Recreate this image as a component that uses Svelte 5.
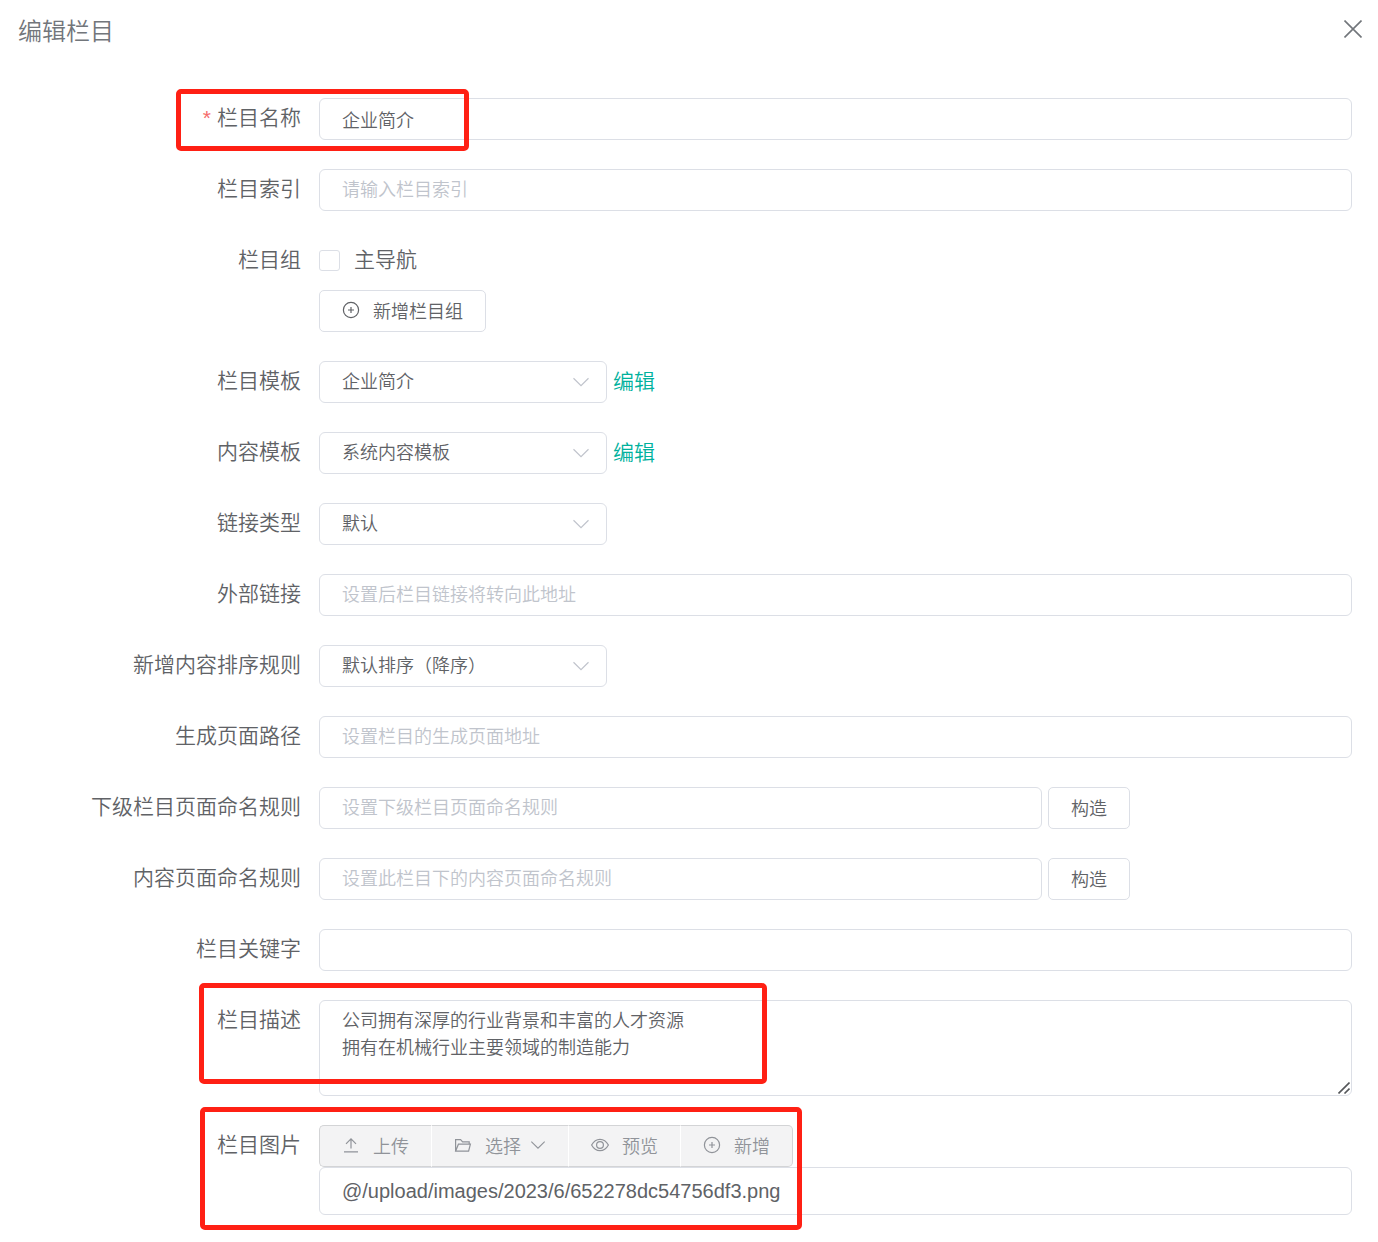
<script>
  let form = {
    name: '企业简介',
    index: '',
    mainNav: false,
    channelTemplate: '企业简介',
    contentTemplate: '系统内容模板',
    linkType: '默认',
    linkUrl: '',
    taxis: '默认排序（降序）',
    filePath: '',
    channelRule: '',
    contentRule: '',
    keywords: '',
    description: '公司拥有深厚的行业背景和丰富的人才资源\n拥有在机械行业主要领域的制造能力',
    image: '@/upload/images/2023/6/652278dc54756df3.png'
  };
</script>

{#snippet plusIcon()}
  <svg class="icon" viewBox="0 0 18 18" aria-hidden="true">
    <circle cx="9" cy="9" r="7.6" />
    <path d="M9 6v6M6 9h6" />
  </svg>
{/snippet}

{#snippet arrowIcon()}
  <svg class="icon arrow" viewBox="0 0 18 18" aria-hidden="true">
    <path d="M1.5 5.2 9 12.6l7.5-7.4" />
  </svg>
{/snippet}

<div class="dialog">
  <header>
    <h1>编辑栏目</h1>
    <button class="close" type="button" aria-label="关闭">
      <svg viewBox="0 0 18 18" aria-hidden="true"><path d="M.5.5l17 17M17.5.5l-17 17" /></svg>
    </button>
  </header>

  <form on:submit|preventDefault>
    <div class="row">
      <label class="label required" for="name">栏目名称</label>
      <input id="name" class="input" type="text" bind:value={form.name} />
      <div class="mark mark-name"></div>
    </div>

    <div class="row">
      <label class="label" for="index">栏目索引</label>
      <input id="index" class="input" type="text" placeholder="请输入栏目索引" bind:value={form.index} />
    </div>

    <div class="row">
      <span class="label">栏目组</span>
      <div class="groups">
        <label class="check">
          <input type="checkbox" bind:checked={form.mainNav} />
          主导航
        </label>
        <button class="button" type="button">{@render plusIcon()}新增栏目组</button>
      </div>
    </div>

    <div class="row">
      <label class="label" for="channelTemplate">栏目模板</label>
      <div class="line">
        <div class="select">
          <select id="channelTemplate" bind:value={form.channelTemplate}>
            <option>企业简介</option>
          </select>
          {@render arrowIcon()}
        </div>
        <a href="#channelTemplate">编辑</a>
      </div>
    </div>

    <div class="row">
      <label class="label" for="contentTemplate">内容模板</label>
      <div class="line">
        <div class="select">
          <select id="contentTemplate" bind:value={form.contentTemplate}>
            <option>系统内容模板</option>
          </select>
          {@render arrowIcon()}
        </div>
        <a href="#contentTemplate">编辑</a>
      </div>
    </div>

    <div class="row">
      <label class="label" for="linkType">链接类型</label>
      <div class="select">
        <select id="linkType" bind:value={form.linkType}>
          <option>默认</option>
        </select>
        {@render arrowIcon()}
      </div>
    </div>

    <div class="row">
      <label class="label" for="linkUrl">外部链接</label>
      <input id="linkUrl" class="input" type="text" placeholder="设置后栏目链接将转向此地址" bind:value={form.linkUrl} />
    </div>

    <div class="row">
      <label class="label" for="taxis">新增内容排序规则</label>
      <div class="select">
        <select id="taxis" bind:value={form.taxis}>
          <option>默认排序（降序）</option>
        </select>
        {@render arrowIcon()}
      </div>
    </div>

    <div class="row">
      <label class="label" for="filePath">生成页面路径</label>
      <input id="filePath" class="input" type="text" placeholder="设置栏目的生成页面地址" bind:value={form.filePath} />
    </div>

    <div class="row">
      <label class="label" for="channelRule">下级栏目页面命名规则</label>
      <div class="line">
        <input id="channelRule" class="input short" type="text" placeholder="设置下级栏目页面命名规则" bind:value={form.channelRule} />
        <button class="button" type="button">构造</button>
      </div>
    </div>

    <div class="row">
      <label class="label" for="contentRule">内容页面命名规则</label>
      <div class="line">
        <input id="contentRule" class="input short" type="text" placeholder="设置此栏目下的内容页面命名规则" bind:value={form.contentRule} />
        <button class="button" type="button">构造</button>
      </div>
    </div>

    <div class="row">
      <label class="label" for="keywords">栏目关键字</label>
      <input id="keywords" class="input" type="text" bind:value={form.keywords} />
    </div>

    <div class="row">
      <label class="label" for="description">栏目描述</label>
      <div class="area">
        <textarea id="description" class="input" bind:value={form.description}></textarea>
        <svg class="grip" viewBox="0 0 12 12" aria-hidden="true"><path d="M.5 11.5l11-11M6.5 11.5l5-5" /></svg>
      </div>
      <div class="mark mark-description"></div>
    </div>

    <div class="row">
      <label class="label" for="image">栏目图片</label>
      <div>
        <div class="button-group">
          <button class="button" type="button" disabled>
            <svg class="icon" viewBox="0 0 18 18" aria-hidden="true">
              <path d="M2 15.8h14M9 12.5V3M4 7.8l5-5 5 5" />
            </svg>
            上传
          </button>
          <button class="button" type="button" disabled>
            <svg class="icon" viewBox="0 0 18 18" aria-hidden="true">
              <path d="M1.6 15.2V3.6h5l2 2.2h6.6v2.4M1.6 15.2l2.8-7h12l-1.8 7z" />
            </svg>
            选择
            {@render arrowIcon()}
          </button>
          <button class="button" type="button" disabled>
            <svg class="icon" viewBox="0 0 18 18" aria-hidden="true">
              <path d="M.6 9C4.8 1.4 13.2 1.4 17.4 9 13.2 16.6 4.8 16.6.6 9z" />
              <circle cx="9" cy="9" r="3.4" />
            </svg>
            预览
          </button>
          <button class="button" type="button" disabled>{@render plusIcon()}新增</button>
        </div>
        <input id="image" class="input large" type="text" bind:value={form.image} />
      </div>
      <div class="mark mark-image"></div>
    </div>
  </form>
</div>

<style>
  :global(body) {
    background: #fff;
  }

  .dialog {
    padding: 18px 26px 26px 0;
    color: #606266;
    font-family: "Liberation Sans", "Noto Sans CJK SC", sans-serif;
    font-size: 21px;
    font-weight: 350;
  }

  header {
    display: flex;
    justify-content: space-between;
    height: 24px;
    margin: 0 -10px 56px 18px;
  }

  h1 {
    margin: 0;
    color: #72767b;
    font-size: 24px;
    font-weight: 350;
    line-height: 28px;
  }

  .close {
    width: 18px;
    height: 22px;
    padding: 0;
    border: 0;
    background: none;
    cursor: pointer;
  }

  .close svg {
    display: block;
    width: 18px;
    height: 18px;
    fill: none;
    stroke: #72767b;
    stroke-width: 1.6;
  }

  form {
    display: flex;
    flex-direction: column;
    gap: 29px;
  }

  .row {
    position: relative;
    display: grid;
    grid-template-columns: 301px minmax(0, 1fr);
    column-gap: 18px;
    align-items: start;
  }

  .label {
    text-align: right;
    line-height: 40px;
  }

  .required::before {
    content: '*';
    margin-right: 6px;
    color: #f56c6c;
  }

  .input,
  select {
    display: block;
    box-sizing: border-box;
    width: 100%;
    height: 42px;
    margin: 0;
    padding: 0 22px;
    border: 1px solid #dcdfe6;
    border-radius: 6px;
    outline: none;
    background: #fff;
    color: #606266;
    font: inherit;
    font-size: 18px;
  }

  .input:focus,
  select:focus {
    border-color: #00b19d;
  }

  .input::placeholder {
    color: #c0c4cc;
    opacity: 1;
  }

  .short {
    width: 70%;
  }

  .large {
    height: 48px;
    font-size: 20px;
  }

  .line {
    display: flex;
    align-items: center;
    gap: 6px;
  }

  .select {
    position: relative;
    width: 288px;
  }

  select {
    appearance: none;
  }

  .select .icon {
    position: absolute;
    top: 12px;
    right: 17px;
    stroke: #c0c4cc;
    pointer-events: none;
  }

  a {
    color: #00b19d;
    line-height: 42px;
    text-decoration: none;
  }

  .groups {
    display: flex;
    flex-direction: column;
    align-items: flex-start;
    gap: 10px;
  }

  .check {
    display: flex;
    align-items: center;
    gap: 14px;
    height: 40px;
    line-height: 38px;
    cursor: pointer;
  }

  .check input {
    appearance: none;
    width: 21px;
    height: 21px;
    margin: 0;
    border: 1px solid #dcdfe6;
    border-radius: 3px;
    background: #fff;
  }

  .check input:checked {
    border-color: #00b19d;
    background: #00b19d;
  }

  .button {
    display: flex;
    align-items: center;
    box-sizing: border-box;
    height: 42px;
    padding: 0 22px 2px;
    border: 1px solid #dcdfe6;
    border-radius: 5px;
    background: #fff;
    color: #606266;
    font: inherit;
    font-size: 18px;
    white-space: nowrap;
    gap: 13px;
    cursor: pointer;
  }

  .icon {
    flex: none;
    width: 18px;
    height: 18px;
    fill: none;
    stroke: currentColor;
    stroke-width: 1.2;
  }

  .button-group {
    display: flex;
  }

  .button-group .button {
    border-color: #d3d4d6;
    border-right-color: #fff;
    border-left-width: 0;
    border-radius: 0;
    background: #f3f3f4;
    color: #909399;
    cursor: not-allowed;
  }

  .button-group .button:first-child {
    border-left-width: 1px;
    border-radius: 5px 0 0 5px;
  }

  .button-group .button:last-child {
    border-right-color: #d3d4d6;
    border-radius: 0 5px 5px 0;
  }

  .button .arrow {
    width: 16px;
    height: 16px;
    margin-left: -4px;
  }

  .area {
    position: relative;
  }

  textarea.input {
    height: 96px;
    padding: 7px 22px;
    line-height: 27px;
    resize: vertical;
  }

  textarea::-webkit-resizer {
    background: transparent;
  }

  .grip {
    position: absolute;
    right: 2px;
    bottom: 2px;
    width: 12px;
    height: 12px;
    fill: none;
    stroke: #55575a;
    stroke-width: 1.6;
    pointer-events: none;
  }

  /* red frames around the fields to fill in */
  .mark {
    position: absolute;
    box-sizing: border-box;
    border: 5px solid #ff2014;
    border-radius: 5px;
    pointer-events: none;
  }

  .mark-name {
    top: -9px;
    left: 176px;
    width: 293px;
    height: 62px;
  }

  .mark-description {
    top: -17px;
    left: 199px;
    width: 568px;
    height: 101px;
  }

  .mark-image {
    top: -18px;
    left: 200px;
    width: 602px;
    height: 123px;
  }
</style>
